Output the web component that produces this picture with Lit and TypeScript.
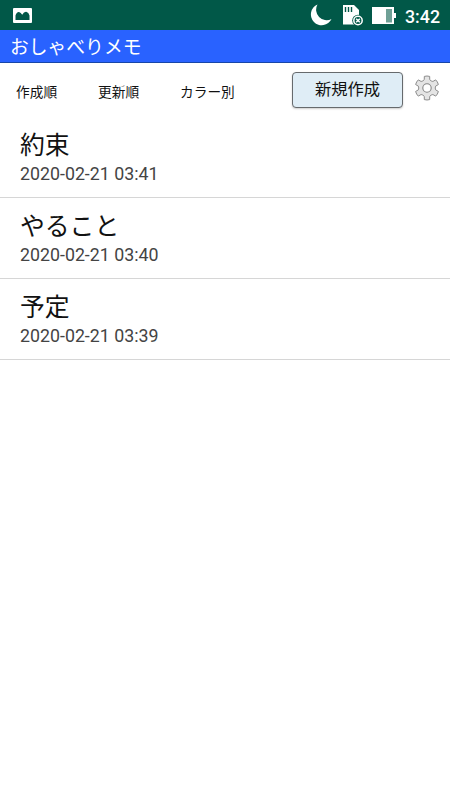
import { LitElement, html, css } from "lit";
import { customElement } from "lit/decorators.js";

interface Memo {
  title: string;
  date: string;
}

const memos: Memo[] = [
  { title: "約束", date: "2020-02-21 03:41" },
  { title: "やること", date: "2020-02-21 03:40" },
  { title: "予定", date: "2020-02-21 03:39" },
];

// Outline of a six-toothed gear centred on 0,0.
function gearPath(): string {
  const point = (r: number, deg: number) => {
    const a = (deg * Math.PI) / 180;
    return `${(r * Math.sin(a)).toFixed(2)} ${(-r * Math.cos(a)).toFixed(2)}`;
  };
  let d = "";
  for (let i = 0; i < 6; i++) {
    const c = i * 60;
    d += `${i ? "L" : "M"}${point(8.8, c - 18)}L${point(11.9, c - 13)}`;
    d += `Q${point(12.4, c)} ${point(11.9, c + 13)}L${point(8.8, c + 18)}`;
    d += `Q${point(7.8, c + 30)} ${point(8.8, c + 42)}`;
  }
  return d + "Z";
}

@customElement("app-root")
export class AppRoot extends LitElement {
  static styles = css`
    :host {
      display: flex;
      flex-direction: column;
      height: 800px;
      background: #fff;
      color: #111;
      font-family: Roboto, "Noto Sans CJK JP", sans-serif;
      overflow: hidden;
    }
    svg {
      display: block;
      flex: none;
    }
    .status {
      display: flex;
      align-items: center;
      height: 30px;
      flex: none;
      box-sizing: border-box;
      padding: 0 10px 0 13px;
      background: #015848;
      color: #fff;
    }
    .picture {
      margin: 1px auto 0 0;
    }
    .clock {
      width: 35px;
      margin-left: 9px;
      padding-top: 3px;
      font-size: 17.8px;
      line-height: 20px;
      font-weight: 500;
      white-space: nowrap;
    }
    .battery {
      margin-top: 1px;
    }
    .title {
      height: 33px;
      flex: none;
      box-sizing: border-box;
      padding: 2px 0 0 10px;
      border-bottom: 1px solid #1746a8;
      background: #2962ff;
      color: #fff;
      font-size: 18.8px;
      line-height: 32px;
    }
    .toolbar {
      display: flex;
      align-items: center;
      height: 54px;
      flex: none;
      box-sizing: border-box;
      padding: 0 10px 1px 16px;
    }
    .sort {
      width: 82px;
      padding-top: 4px;
      font-size: 13.7px;
      line-height: 20px;
      white-space: nowrap;
    }
    .create {
      width: 111px;
      height: 36px;
      box-sizing: border-box;
      margin-left: auto;
      border: 1.5px solid #666a6d;
      border-radius: 4px;
      padding: 0;
      background: #dfedf6;
      color: #111;
      font: 16.3px/34px Roboto, "Noto Sans CJK JP", sans-serif;
      text-align: center;
      box-shadow: 0 1px 2px #0003;
    }
    .gear {
      margin: 0 0 3px 11px;
    }
    .memo {
      height: 81px;
      box-sizing: border-box;
      padding: 11px 20px 0;
      border-bottom: 1px solid #d6d6d6;
    }
    .name {
      font-size: 24.8px;
      line-height: 36px;
    }
    .date {
      color: #444;
      font-size: 17.8px;
      line-height: 20px;
    }
  `;

  render() {
    return html`
      <div class="status">
        <svg class="picture" width="19" height="15" viewBox="0 0 19 15">
          <rect width="19" height="15" rx="1" fill="#fff" />
          <path d="M2.5 12V7.5Q3.6 3.8 6 4Q8 4.4 9.2 6.8Q11 3.6 13.2 3.8Q15.8 4.6 16.5 7.5V12Z" fill="#015848" />
        </svg>
        <svg width="22" height="22" viewBox="0 0 22 22">
          <path d="M7.5 .5A10.8 10.8 0 1 0 21.5 15A10.5 10.5 0 0 1 7.5 .5Z" fill="#fff" />
        </svg>
        <svg class="card" width="32" height="22" viewBox="0 0 32 22">
          <path d="M11 1H22L27 6V20.5H11Z" fill="#fff" />
          <path d="M13.5 3V8M16.5 3V8M19.5 3V8" stroke="#015848" stroke-width="1.4" />
          <circle cx="26" cy="16.5" r="5.8" fill="#015848" />
          <circle cx="26" cy="16.5" r="4.2" fill="none" stroke="#fff" stroke-width="1.5" />
          <path d="M24.2 14.7L27.8 18.3M27.8 14.7L24.2 18.3" stroke="#fff" stroke-width="1.5" />
        </svg>
        <svg class="battery" width="32" height="18" viewBox="0 0 32 18">
          <path d="M8 0H30V6H32V11H30V17H8Z" fill="#fff" />
          <rect x="22" y="2" width="6" height="13.5" fill="#6fa096" />
        </svg>
        <div class="clock">3:42</div>
      </div>
      <div class="title">おしゃべりメモ</div>
      <div class="toolbar">
        <div class="sort">作成順</div>
        <div class="sort">更新順</div>
        <div class="sort">カラー別</div>
        <button class="create">新規作成</button>
        <svg class="gear" width="26" height="26" viewBox="-13 -13 26 26">
          <path d=${gearPath()} fill="#e4e4e4" stroke="#8c8c8c" stroke-width="1" stroke-linejoin="round" />
          <circle r="4.2" fill="#fff" stroke="#858585" stroke-width="1.1" />
        </svg>
      </div>
      ${memos.map(
        (m) => html`<div class="memo">
          <div class="name">${m.title}</div>
          <div class="date">${m.date}</div>
        </div>`
      )}
    `;
  }
}
